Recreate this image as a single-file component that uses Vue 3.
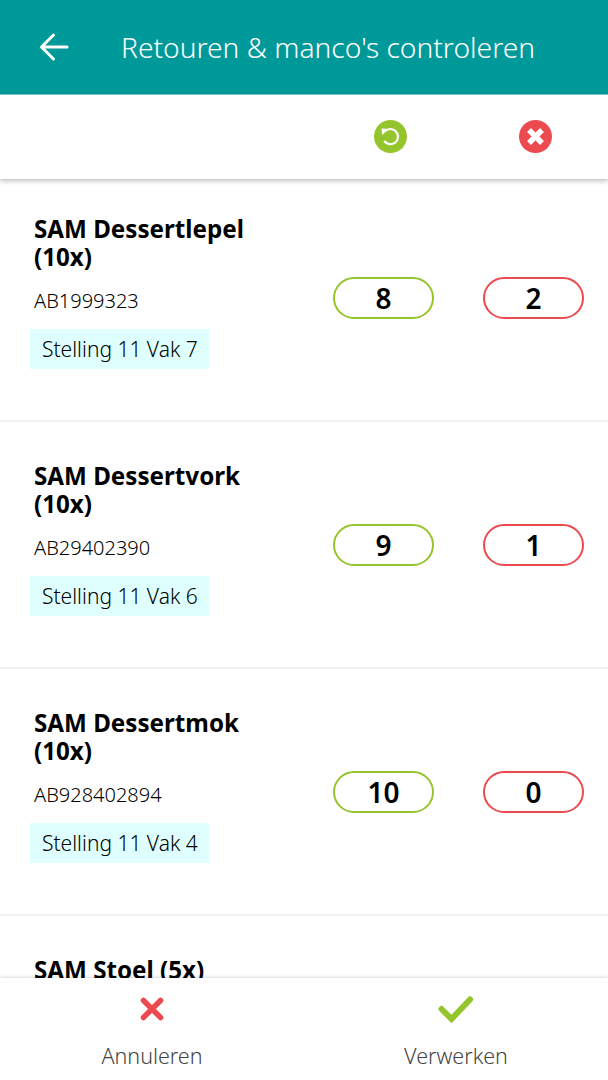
<template>
  <div class="page">
    <header class="topbar">
      <button class="back" aria-label="Terug">
        <svg width="30" height="30" viewBox="0 0 30 30" fill="none" stroke="#fff" stroke-width="3" stroke-linecap="round" stroke-linejoin="round">
          <path d="M3 15H28M14.5 3L2.5 15L14.5 27" />
        </svg>
      </button>
      <h1>Retouren &amp; manco's controleren</h1>
    </header>

    <div class="legend">
      <div class="legend-cell">
        <svg width="33" height="33" viewBox="0 0 33 33">
          <circle cx="16.5" cy="16.5" r="16.5" fill="#95c52d" />
          <path d="M10.8 11.5A7.6 7.6 0 1 1 10.2 21" fill="none" stroke="#fff" stroke-width="2.2" />
          <path d="M7.5 8.5L14.5 9L8.2 15Z" fill="#fff" />
        </svg>
      </div>
      <div class="legend-cell">
        <svg width="33" height="33" viewBox="0 0 33 33">
          <circle cx="16.5" cy="16.5" r="16.5" fill="#ec4a4f" />
          <path d="M10 10L23 23M23 10L10 23" stroke="#fff" stroke-width="5.5" />
        </svg>
      </div>
    </div>

    <main class="list">
      <section v-for="item in items" :key="item.name" class="row">
        <div class="info">
          <h2>{{ item.name }}</h2>
          <p v-if="item.code" class="code">{{ item.code }}</p>
          <span v-if="item.place" class="place">{{ item.place }}</span>
        </div>
        <div v-if="item.code" class="counts">
          <span class="pill ok">{{ item.ok }}</span>
          <span class="pill bad">{{ item.bad }}</span>
        </div>
      </section>
    </main>

    <footer class="actions">
      <button class="action">
        <svg width="30" height="30" viewBox="0 0 30 30">
          <path d="M6.5 6.5L23.5 23.5M23.5 6.5L6.5 23.5" stroke="#ec4a4f" stroke-width="5.5" stroke-linecap="round" />
        </svg>
        <span>Annuleren</span>
      </button>
      <button class="action">
        <svg width="36" height="30" viewBox="0 0 36 30">
          <path d="M3.5 15L13.5 25L32 5.5" fill="none" stroke="#95c52d" stroke-width="6" stroke-linecap="round" />
        </svg>
        <span>Verwerken</span>
      </button>
    </footer>
  </div>
</template>

<script setup>
const items = [
  { name: 'SAM Dessertlepel (10x)', code: 'AB1999323', place: 'Stelling 11 Vak 7', ok: 8, bad: 2 },
  { name: 'SAM Dessertvork (10x)', code: 'AB29402390', place: 'Stelling 11 Vak 6', ok: 9, bad: 1 },
  { name: 'SAM Dessertmok (10x)', code: 'AB928402894', place: 'Stelling 11 Vak 4', ok: 10, bad: 0 },
  { name: 'SAM Stoel (5x)' }
]
</script>

<style>
html, body {
  margin: 0;
  background: #fff;
}
</style>

<style scoped>
.page {
  display: flex;
  flex-direction: column;
  height: 1080px;
  overflow: hidden;
  background: #fff;
  font-family: 'Noto Sans', 'Open Sans', sans-serif;
  color: #000;
}

.topbar {
  display: flex;
  align-items: center;
  flex: none;
  height: 94px;
  padding-left: 39px;
  background: #009999;
  border-bottom: 1px solid #7fcccc;
  color: #fff;
}

.back {
  display: flex;
  padding: 0;
  border: none;
  background: none;
}

.topbar h1 {
  margin: 0 0 0 52px;
  font-size: 28.2px;
  font-weight: 300;
  white-space: nowrap;
}

.legend {
  position: relative;
  z-index: 1;
  display: flex;
  flex: none;
  justify-content: flex-end;
  gap: 45px;
  height: 84px;
  padding-right: 23px;
  background: #fff;
  box-shadow: 0 2px 5px rgba(0, 0, 0, 0.25);
}

.legend-cell {
  display: flex;
  justify-content: center;
  align-items: center;
  width: 100px;
  margin-top: -1px;
}

.list {
  flex: 1;
  min-height: 0;
  margin-top: -4px;
  overflow: hidden;
}

.row {
  display: flex;
  justify-content: space-between;
  box-sizing: border-box;
  height: 247px;
  padding: 0 24px 0 29px;
  border-bottom: 2px solid #f0f0f0;
}

.info {
  width: 250px;
  padding-top: 40px;
}

.info h2 {
  margin: 0;
  padding-left: 5px;
  font-size: 24.2px;
  font-weight: 700;
  line-height: 28px;
}

.code {
  margin: 16px 0 14px;
  padding-left: 5px;
  font-size: 20px;
  font-weight: 300;
  line-height: 28px;
}

.place {
  display: inline-block;
  margin-left: 1px;
  padding: 0 11px 0 12px;
  background: #dfffff;
  font-size: 21px;
  font-weight: 300;
  line-height: 40px;
}

.counts {
  display: flex;
  align-self: center;
  gap: 49px;
}

.pill {
  box-sizing: border-box;
  width: 101px;
  height: 42px;
  border: 2px solid;
  border-radius: 21px;
  font-size: 28px;
  font-weight: 600;
  line-height: 38px;
  text-align: center;
}

.ok {
  border-color: #95c52d;
}

.bad {
  border-color: #ec4a4f;
}

.actions {
  position: relative;
  display: flex;
  flex: none;
  height: 102px;
  background: #fff;
  box-shadow: 0 -1px 3px rgba(0, 0, 0, 0.15);
}

.action {
  display: flex;
  flex: 1;
  flex-direction: column;
  align-items: center;
  padding: 16px 0 0;
  border: none;
  background: none;
  font-family: inherit;
  color: #444;
}

.action span {
  margin-top: 18px;
  font-size: 21.5px;
  font-weight: 300;
  line-height: 28px;
}
</style>
